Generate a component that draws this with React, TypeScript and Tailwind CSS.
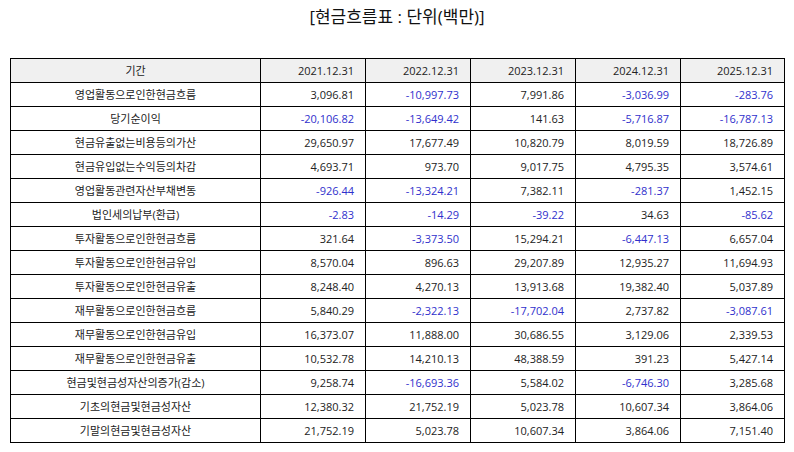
import React from "react";

const cols = ["2021.12.31", "2022.12.31", "2023.12.31", "2024.12.31", "2025.12.31"];

const rows: [string, string[]][] = [
  ["영업활동으로인한현금흐름", ["3,096.81", "-10,997.73", "7,991.86", "-3,036.99", "-283.76"]],
  ["당기순이익", ["-20,106.82", "-13,649.42", "141.63", "-5,716.87", "-16,787.13"]],
  ["현금유출없는비용등의가산", ["29,650.97", "17,677.49", "10,820.79", "8,019.59", "18,726.89"]],
  ["현금유입없는수익등의차감", ["4,693.71", "973.70", "9,017.75", "4,795.35", "3,574.61"]],
  ["영업활동관련자산부채변동", ["-926.44", "-13,324.21", "7,382.11", "-281.37", "1,452.15"]],
  ["법인세의납부(환급)", ["-2.83", "-14.29", "-39.22", "34.63", "-85.62"]],
  ["투자활동으로인한현금흐름", ["321.64", "-3,373.50", "15,294.21", "-6,447.13", "6,657.04"]],
  ["투자활동으로인한현금유입", ["8,570.04", "896.63", "29,207.89", "12,935.27", "11,694.93"]],
  ["투자활동으로인한현금유출", ["8,248.40", "4,270.13", "13,913.68", "19,382.40", "5,037.89"]],
  ["재무활동으로인한현금흐름", ["5,840.29", "-2,322.13", "-17,702.04", "2,737.82", "-3,087.61"]],
  ["재무활동으로인한현금유입", ["16,373.07", "11,888.00", "30,686.55", "3,129.06", "2,339.53"]],
  ["재무활동으로인한현금유출", ["10,532.78", "14,210.13", "48,388.59", "391.23", "5,427.14"]],
  ["현금및현금성자산의증가(감소)", ["9,258.74", "-16,693.36", "5,584.02", "-6,746.30", "3,285.68"]],
  ["기초의현금및현금성자산", ["12,380.32", "21,752.19", "5,023.78", "10,607.34", "3,864.06"]],
  ["기말의현금및현금성자산", ["21,752.19", "5,023.78", "10,607.34", "3,864.06", "7,151.40"]],
];

export default function App() {
  return (
    <div
      className="w-[794px] h-[452px] bg-white text-[#222]"
      style={{ fontFamily: '"Open Sans", "Noto Sans CJK KR", sans-serif' }}
    >
      <div className="h-[58px] pt-[3px] text-center text-[17px] leading-[28px] text-[#111]">
        [현금흐름표 : 단위(백만)]
      </div>
      <div className="px-[10px]">
        <table className="w-[774px] table-fixed border-collapse border border-black text-[11px]">
          <colgroup>
            <col className="w-[250px]" />
            <col className="w-[105px]" />
            <col className="w-[105px]" />
            <col className="w-[105px]" />
            <col className="w-[105px]" />
            <col className="w-[104px]" />
          </colgroup>
          <thead>
            <tr className="h-[24px] bg-[#f0f0f0]">
              <th className="border border-black font-normal text-center p-0 leading-none">기간</th>
              {cols.map((c) => (
                <th key={c} className="border border-black font-normal text-right p-0 pr-[11px] leading-none">
                  {c}
                </th>
              ))}
            </tr>
          </thead>
          <tbody>
            {rows.map(([label, vals]) => (
              <tr key={label} className="h-[24px]">
                <td className="border border-black text-center p-0 leading-none">{label}</td>
                {vals.map((v, i) => (
                  <td
                    key={i}
                    className={
                      v.startsWith("-")
                        ? "border border-black text-right p-0 pr-[11px] leading-none text-[#3030cc]"
                        : "border border-black text-right p-0 pr-[11px] leading-none"
                    }
                  >
                    {v}
                  </td>
                ))}
              </tr>
            ))}
          </tbody>
        </table>
      </div>
    </div>
  );
}
